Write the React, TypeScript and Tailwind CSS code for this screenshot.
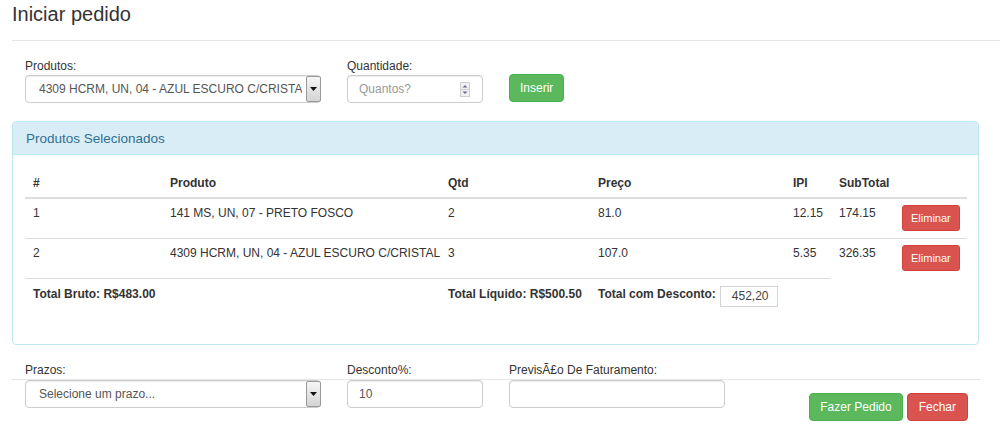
import React from "react";

function SelectBox({ text }: { text: string }) {
  return (
    <div className="flex h-[28px] w-[296px] items-stretch rounded-[4px] border border-[#ccc] bg-white shadow-[inset_0_1px_1px_rgba(0,0,0,0.075)]">
      <div className="ml-[13px] mr-[4px] flex flex-1 items-center overflow-hidden whitespace-nowrap text-[#555]">{text}</div>
      <div className="-mr-px flex w-[15px] items-center justify-center rounded-[2px] border border-[#9a9a9a] bg-gradient-to-b from-[#f6f6f6] to-[#d4d4d4]">
        <svg width="7" height="4" viewBox="0 0 7 4">
          <path d="M0 0 L7 0 L3.5 4 Z" fill="#111" />
        </svg>
      </div>
    </div>
  );
}

function TextInput({ value, placeholder, width, spinner }: { value?: string; placeholder?: string; width: string; spinner?: boolean }) {
  return (
    <div className={`flex h-[28px] items-center justify-between rounded-[4px] border border-[#ccc] bg-white pl-[11px] pr-[12px] shadow-[inset_0_1px_1px_rgba(0,0,0,0.075)] ${width}`}>
      <span className={value ? "text-[#555]" : "text-[#999]"}>{value ?? placeholder}</span>
      {spinner && (
        <svg width="10" height="15" viewBox="0 0 10 15">
          <rect x="0.5" y="0.5" width="9" height="14" fill="#f1f1f1" stroke="#d0d0d0" />
          <line x1="1" y1="7.5" x2="9" y2="7.5" stroke="#d0d0d0" />
          <path d="M2.5 5.5 L7.5 5.5 L5 3 Z" fill="#6b6b8a" />
          <path d="M2.5 9.5 L7.5 9.5 L5 12 Z" fill="#6b6b8a" />
        </svg>
      )}
    </div>
  );
}

function RemoveBtn() {
  return (
    <button className="h-[26px] rounded-[3px] border border-[#d43f3a] bg-[#d9534f] px-[8px] text-[11px] leading-[24px] text-white">
      Eliminar
    </button>
  );
}

export default function App() {
  const rows = [
    { n: "1", p: "141 MS, UN, 07 - PRETO FOSCO", q: "2", preco: "81.0", ipi: "12.15", sub: "174.15" },
    { n: "2", p: "4309 HCRM, UN, 04 - AZUL ESCURO C/CRISTAL", q: "3", preco: "107.0", ipi: "5.35", sub: "326.35" },
  ];
  return (
    <div className="h-[436px] w-[1000px] overflow-hidden bg-white font-['Liberation_Sans',Arial,sans-serif] text-[12px] leading-[17px] text-[#333]">
      {/* header */}
      <div className="ml-[12px] h-[41px] border-b border-[#e5e5e5]">
        <h4 className="text-[20px] leading-[28px] text-[#333]">Iniciar pedido</h4>
      </div>

      {/* first form row */}
      <div className="flex gap-[26px] pl-[25px] pt-[17px]">
        <div className="w-[296px]">
          <div>Produtos:</div>
          <SelectBox text="4309 HCRM, UN, 04 - AZUL ESCURO C/CRISTA" />
        </div>
        <div className="w-[136px]">
          <div>Quantidade:</div>
          <TextInput placeholder="Quantos?" width="w-[136px]" spinner />
        </div>
        <button className="mb-[1px] h-[28px] self-end rounded-[4px] border border-[#4cae4c] bg-[#5cb85c] px-[10px] text-[12px] text-white">
          Inserir
        </button>
      </div>

      {/* panel */}
      <div className="ml-[12px] mt-[18px] w-[967px] rounded-[4px] border border-[#bce8f1]">
        <div className="flex h-[33px] items-center rounded-t-[3px] border-b border-[#bce8f1] bg-[#d9edf7] px-[13px] text-[13.5px] text-[#31708f]">
          Produtos Selecionados
        </div>
        <div className="px-[12px] pb-[30px] pt-[13px]">
          <table className="w-[942px] table-fixed border-separate border-spacing-0">
            <colgroup>
              <col className="w-[137px]" />
              <col className="w-[278px]" />
              <col className="w-[150px]" />
              <col className="w-[195px]" />
              <col className="w-[46px]" />
              <col className="w-[63px]" />
              <col className="w-[73px]" />
            </colgroup>
            <thead>
              <tr>
                {["#", "Produto", "Qtd", "Preço", "IPI", "SubTotal", ""].map((h, i) => (
                  <th key={i} className="border-b-2 border-[#ddd] px-[8px] pb-[5px] pt-[7px] text-left font-bold">
                    {h}
                  </th>
                ))}
              </tr>
            </thead>
            <tbody>
              {rows.map((r, i) => {
                const b = i > 0 ? "border-t border-[#ddd]" : "";
                const c = `${b} px-[8px] pt-[6px] pb-[7px] align-top whitespace-nowrap`;
                return (
                  <tr key={r.n}>
                    <td className={c}>{r.n}</td>
                    <td className={c}>{r.p}</td>
                    <td className={c}>{r.q}</td>
                    <td className={c}>{r.preco}</td>
                    <td className={c}>{r.ipi}</td>
                    <td className={c}>{r.sub}</td>
                    <td className={c}>
                      <RemoveBtn />
                    </td>
                  </tr>
                );
              })}
              <tr>
                <td colSpan={2} className="border-t border-[#ddd] px-[8px] pb-[7px] pt-[7px] align-top font-bold">
                  Total Bruto: R$483.00
                </td>
                <td className="whitespace-nowrap border-t border-[#ddd] px-[8px] pb-[7px] pt-[7px] align-top font-bold">
                  Total Líquido: R$500.50
                </td>
                <td colSpan={2} className="border-t border-[#ddd] px-[8px] pb-[7px] pt-[7px] align-top">
                  <div className="flex items-start gap-[4px]">
                    <span className="font-bold">Total com Desconto:</span>
                    <div className="flex h-[21px] w-[58px] items-center border border-[#d4d4d4] pl-[11px] text-[#444]">452,20</div>
                  </div>
                </td>
                <td colSpan={2}></td>
              </tr>
            </tbody>
          </table>
        </div>
      </div>

      {/* bottom labels */}
      <div className="mt-[17px] flex gap-[26px] pl-[25px]">
        <div className="w-[296px]">Prazos:</div>
        <div className="w-[136px]">Desconto%:</div>
        <div className="w-[216px]">PrevisÃ£o De Faturamento:</div>
      </div>
      <div className="ml-[12px] flex w-[968px] items-start border-t border-[#e5e5e5] pl-[13px] pr-[12px]">
        <div className="flex gap-[26px]">
          <SelectBox text="Selecione um prazo..." />
          <TextInput value="10" width="w-[136px]" />
          <TextInput value="" width="w-[216px]" />
        </div>
        <div className="ml-auto mt-[13px] flex gap-[4px]">
          <button className="h-[28px] rounded-[4px] border border-[#4cae4c] bg-[#5cb85c] px-[10px] text-[12px] text-white">
            Fazer Pedido
          </button>
          <button className="h-[28px] rounded-[4px] border border-[#d43f3a] bg-[#d9534f] px-[11px] text-[12px] text-white">
            Fechar
          </button>
        </div>
      </div>
    </div>
  );
}
